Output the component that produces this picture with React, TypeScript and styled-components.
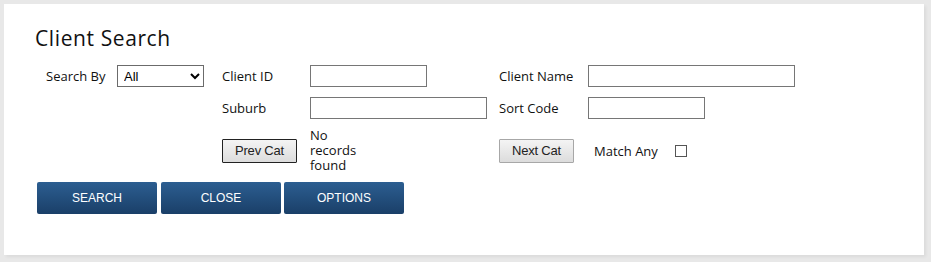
import styled, {createGlobalStyle} from 'styled-components'

const GlobalStyle = createGlobalStyle`
    html, body {
        margin: 0;
        padding: 0;
        background: #e8e8e8;
    }
    body {
        font-family: "Open Sans", "Noto Sans", sans-serif;
        color: #111;
    }
`

const Page = styled.div`
    padding: 4px 7px 7px 4px;
    width: 931px;
    height: 262px;
    box-sizing: border-box;
`

const Panel = styled.section`
    background: #fff;
    height: 251px;
    box-sizing: border-box;
    padding: 22px 0 0 31px;
    box-shadow: 2px 2px 3px rgba(0, 0, 0, 0.06);
`

const Title = styled.h1`
    margin: 0 0 15px;
    font-size: 21px;
    font-weight: 400;
    line-height: 24px;
    letter-spacing: 0.6px;
`

const Form = styled.div`
    display: grid;
    grid-template-columns: 71px 105px 88px 189px 89px auto;
    grid-template-rows: 22px 22px 46px;
    row-gap: 10px;
    align-items: center;
    margin-left: 11px;
`

const Label = styled.label`
    font-size: 13px;
    line-height: 16px;
    white-space: nowrap;
`

const Select = styled.select`
    width: 87px;
    height: 22px;
    border: 1px solid #6b6b6b;
    border-radius: 0;
    background: #fff;
    font-family: "Liberation Sans", Arial, sans-serif;
    font-size: 13px;
    padding: 0 2px;
`

const TextInput = styled.input<{$w: number}>`
    width: ${p => p.$w}px;
    height: 22px;
    box-sizing: border-box;
    border: 1px solid #767676;
    padding: 0 3px;
    font-size: 13px;
`

const CatButton = styled.button<{$focused?: boolean}>`
    height: 24px;
    padding: 0 12px;
    margin-top: -3px;
    font-family: "Liberation Sans", Arial, sans-serif;
    font-size: 13px;
    letter-spacing: -0.2px;
    color: #222;
    background: linear-gradient(#f4f4f4, #dcdcdc);
    border: 1px solid ${p => p.$focused ? '#222' : '#a7a7a7'};
    border-radius: 1px;
    justify-self: start;
`

const Status = styled.div`
    font-size: 13px;
    line-height: 15px;
    width: 60px;
    margin-top: -3px;
`

const MatchAny = styled.div`
    display: flex;
    align-items: center;
    gap: 17px;
    margin: -3px 0 0 6px;
`

const Check = styled.input`
    margin: 0;
    width: 12px;
    height: 12px;
    appearance: none;
    border: 1px solid #555;
    background: #fff;
`

const Actions = styled.div`
    display: flex;
    gap: 4px;
    margin: 7px 0 0 2px;
`

const ActionButton = styled.button`
    width: 120px;
    height: 32px;
    border: none;
    border-radius: 2px;
    background: linear-gradient(#2c5e91, #1a3f68);
    color: #fff;
    font-family: "Liberation Sans", Arial, sans-serif;
    font-size: 12px;
    text-transform: uppercase;
    &:last-child {
        margin-left: -1px;
    }
`

export default function App() {
    return (
        <Page>
            <GlobalStyle/>
            <Panel>
                <Title>Client Search</Title>
                <Form>
                    <Label>Search By</Label>
                    <Select defaultValue="All">
                        <option>All</option>
                    </Select>
                    <Label>Client ID</Label>
                    <TextInput $w={117}/>
                    <Label>Client Name</Label>
                    <TextInput $w={207}/>

                    <span/>
                    <span/>
                    <Label>Suburb</Label>
                    <TextInput $w={177}/>
                    <Label>Sort Code</Label>
                    <TextInput $w={117}/>

                    <span/>
                    <span/>
                    <CatButton $focused>Prev Cat</CatButton>
                    <Status>No records found</Status>
                    <CatButton>Next Cat</CatButton>
                    <MatchAny>
                        <Label>Match Any</Label>
                        <Check type="checkbox"/>
                    </MatchAny>
                </Form>
                <Actions>
                    <ActionButton>Search</ActionButton>
                    <ActionButton>Close</ActionButton>
                    <ActionButton>Options</ActionButton>
                </Actions>
            </Panel>
        </Page>
    )
}
